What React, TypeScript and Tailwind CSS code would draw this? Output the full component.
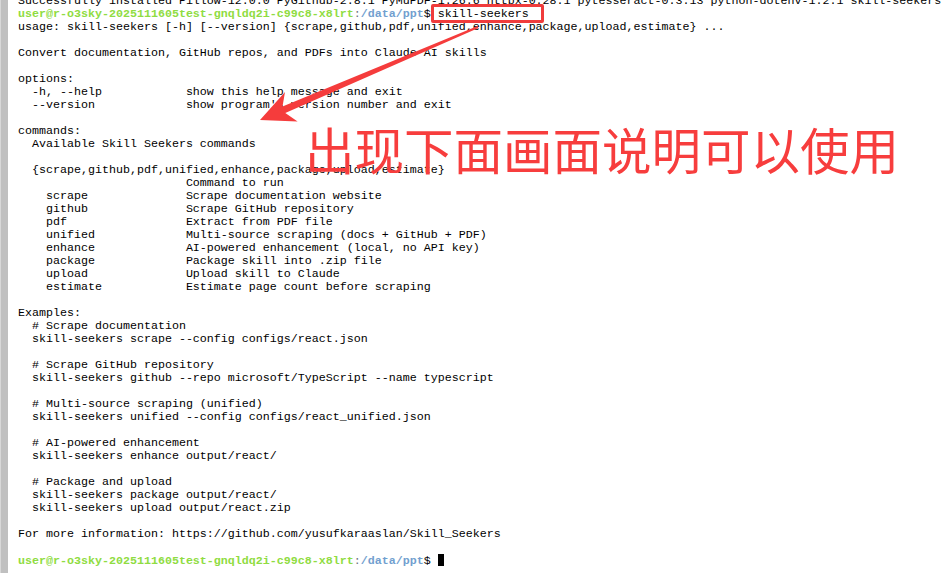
import React from "react";

type Seg = { t: string; c?: string };

const P = "user@r-o3sky-2025111605test-gnqldq2i-c99c8-x8lrt";

const lines: (string | Seg[])[] = [
  "Successfully installed Pillow-12.0.0 PyGithub-2.8.1 PyMuPDF-1.26.6 httpx-0.28.1 pytesseract-0.3.13 python-dotenv-1.2.1 skill-seekers-2.0.0",
  [
    { t: P, c: "prompt" },
    { t: ":", c: "colon" },
    { t: "/data/ppt", c: "path" },
    { t: "$ skill-seekers" },
  ],
  "usage: skill-seekers [-h] [--version] {scrape,github,pdf,unified,enhance,package,upload,estimate} ...",
  "",
  "Convert documentation, GitHub repos, and PDFs into Claude AI skills",
  "",
  "options:",
  "  -h, --help            show this help message and exit",
  "  --version             show program's version number and exit",
  "",
  "commands:",
  "  Available Skill Seekers commands",
  "",
  "  {scrape,github,pdf,unified,enhance,package,upload,estimate}",
  "                        Command to run",
  "    scrape              Scrape documentation website",
  "    github              Scrape GitHub repository",
  "    pdf                 Extract from PDF file",
  "    unified             Multi-source scraping (docs + GitHub + PDF)",
  "    enhance             AI-powered enhancement (local, no API key)",
  "    package             Package skill into .zip file",
  "    upload              Upload skill to Claude",
  "    estimate            Estimate page count before scraping",
  "",
  "Examples:",
  "  # Scrape documentation",
  "  skill-seekers scrape --config configs/react.json",
  "",
  "  # Scrape GitHub repository",
  "  skill-seekers github --repo microsoft/TypeScript --name typescript",
  "",
  "  # Multi-source scraping (unified)",
  "  skill-seekers unified --config configs/react_unified.json",
  "",
  "  # AI-powered enhancement",
  "  skill-seekers enhance output/react/",
  "",
  "  # Package and upload",
  "  skill-seekers package output/react/",
  "  skill-seekers upload output/react.zip",
  "",
  "For more information: https://github.com/yusufkaraaslan/Skill_Seekers",
  "",
  [
    { t: P, c: "prompt" },
    { t: ":", c: "colon" },
    { t: "/data/ppt", c: "path" },
    { t: "$ " },
    { t: "", c: "cursor" },
  ],
];

function renderSeg(s: Seg, i: number) {
  if (s.c === "prompt")
    return (
      <span key={i} className="font-bold text-[#8fdc42]">
        {s.t}
      </span>
    );
  if (s.c === "colon")
    return (
      <span key={i} className="text-[#6b7280]">
        {s.t}
      </span>
    );
  if (s.c === "path")
    return (
      <span key={i} className="font-bold text-[#729fcf]">
        {s.t}
      </span>
    );
  if (s.c === "cursor")
    return (
      <span
        key={i}
        className="inline-block w-[6px] h-[12px] bg-black align-[-2px]"
      />
    );
  return <span key={i}>{s.t}</span>;
}

export default function App() {
  return (
    <div className="relative w-[941px] h-[573px] overflow-hidden bg-white">
      <div className="flex h-full">
        <div className="w-[8px] shrink-0 bg-[#c0c0c0] border-l border-[#d8d8d8]" />
        <div className="pl-[10px] mt-[-5px] font-['Liberation_Mono',monospace] text-[11.67px] text-black">
          {lines.map((l, i) => (
            <div key={i} className="h-[13px] leading-[13px] whitespace-pre">
              {typeof l === "string" ? l || " " : l.map(renderSeg)}
            </div>
          ))}
        </div>
      </div>

      {/* annotations */}
      <div className="absolute left-[431px] top-[4px] w-[113px] h-[19px] border-[3px] border-[#f03c3c] rounded-[2px]" />
      <svg
        className="absolute left-0 top-0 pointer-events-none"
        width="941"
        height="573"
        viewBox="0 0 941 573"
      >
        <polygon
          points="477.6,26.1 282.5,106.6 285,92 260,120 297.6,121.4 285.3,113 478.4,27.9"
          fill="#f53c3c"
        />
      </svg>
      <div className="absolute left-[305px] top-[124px] leading-none text-[49.5px] text-[#f73d3d] font-['Noto_Sans_CJK_SC',sans-serif] whitespace-nowrap">
        出现下面画面说明可以使用
      </div>
    </div>
  );
}
